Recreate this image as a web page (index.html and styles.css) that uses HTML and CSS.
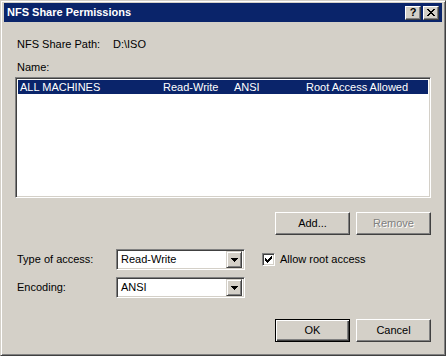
FILE: index.html
```html
<!DOCTYPE html>
<html>
<head>
<meta charset="utf-8">
<link rel="stylesheet" href="styles.css">
</head>
<body>
<div class="window">
  <div class="titlebar">
    <span class="title">NFS Share Permissions</span>
    <div class="caption-btns">
      <div class="cap cap-help">?</div>
      <div class="cap">
        <svg width="8" height="7" viewBox="0 0 8 7" shape-rendering="crispEdges"><path d="M0 0h2v1H0zM6 0h2v1H6zM1 1h2v1H1zM5 1h2v1H5zM2 2h4v1H2zM3 3h2v1H3zM2 4h4v1H2zM1 5h2v1H1zM5 5h2v1H5zM0 6h2v1H0zM6 6h2v1H6z" fill="#000"/></svg>
      </div>
    </div>
  </div>
  <div class="content">
    <div class="path-row"><span class="path-lbl">NFS Share Path:</span><span>D:\ISO</span></div>
    <div class="name-lbl">Name:</div>
    <div class="listbox">
      <div class="row selected">
        <span class="c1">ALL MACHINES</span><span class="c2">Read-Write</span><span class="c3">ANSI</span><span class="c4">Root Access Allowed</span>
      </div>
    </div>
    <div class="btn-row">
      <div class="btn">Add...</div>
      <div class="btn disabled">Remove</div>
    </div>
    <div class="field-row first">
      <span class="flbl">Type of access:</span>
      <div class="combo"><span class="combo-text">Read-Write</span><div class="drop"><svg width="7" height="4" viewBox="0 0 7 4" shape-rendering="crispEdges"><path d="M0 0h7v1H0zM1 1h5v1H1zM2 2h3v1H2zM3 3h1v1H3z" fill="#000"/></svg></div></div>
      <div class="check"><svg width="7" height="7" viewBox="0 0 7 7" shape-rendering="crispEdges"><path d="M0 2h1v3H0zM1 3h1v3H1zM2 4h1v3H2zM3 3h1v3H3zM4 2h1v3H4zM5 1h1v3H5zM6 0h1v3H6z" fill="#000"/></svg></div>
      <span class="check-lbl">Allow root access</span>
    </div>
    <div class="field-row second">
      <span class="flbl">Encoding:</span>
      <div class="combo"><span class="combo-text">ANSI</span><div class="drop"><svg width="7" height="4" viewBox="0 0 7 4" shape-rendering="crispEdges"><path d="M0 0h7v1H0zM1 1h5v1H1zM2 2h3v1H2zM3 3h1v1H3z" fill="#000"/></svg></div></div>
    </div>
    <div class="btn-row bottom">
      <div class="btn default"><span>OK</span></div>
      <div class="btn">Cancel</div>
    </div>
  </div>
</div>
</body>
</html>
```
FILE: styles.css
```css
html, body {
  margin: 0;
  padding: 0;
  background: #d4d0c8;
}
body {
  font-family: "Liberation Sans", Arial, sans-serif;
  font-size: 11px;
  color: #000;
}
.window {
  width: 446px;
  height: 356px;
  box-sizing: border-box;
  border: 1px solid;
  border-color: #d4d0c8 #404040 #404040 #d4d0c8;
  box-shadow: inset 1px 1px #fff, inset -1px -1px #808080;
  padding: 2px 3px 3px 3px;
  background: #d4d0c8;
  display: flex;
  flex-direction: column;
}
.titlebar {
  height: 19px;
  background: #0a246a;
  display: flex;
  align-items: center;
  justify-content: space-between;
  padding: 0 3px 0 3px;
  flex: none;
}
.title {
  color: #fff;
  font-weight: bold;
  font-size: 11px;
  line-height: 13px;
}
.caption-btns {
  display: flex;
  gap: 2px;
}
.cap {
  width: 16px;
  height: 14px;
  box-sizing: border-box;
  background: #d4d0c8;
  border: 1px solid;
  border-color: #fff #404040 #404040 #fff;
  box-shadow: inset -1px -1px #808080;
  display: flex;
  align-items: center;
  justify-content: center;
}
.cap-help {
  font-weight: bold;
  font-size: 11px;
  line-height: 11px;
  padding-bottom: 1px;
}
.content {
  padding: 0 8px 0 11px;
  display: flex;
  flex-direction: column;
}
.path-row {
  margin-top: 16px;
  padding-left: 2px;
  line-height: 13px;
  display: flex;
}
.path-lbl {
  width: 96px;
}
.name-lbl {
  margin-top: 10px;
  padding-left: 2px;
  line-height: 13px;
}
.listbox {
  margin-top: 3px;
  width: 416px;
  height: 121px;
  box-sizing: border-box;
  background: #fff;
  border: 1px solid;
  border-color: #808080 #fff #fff #808080;
  box-shadow: inset 1px 1px #404040, inset -1px -1px #d4d0c8;
  padding: 2px 2px 2px 2px;
}
.row {
  height: 14px;
  line-height: 14px;
  display: grid;
  grid-template-columns: 143px 71px 72px 1fr;
  padding-left: 2px;
}
.row.selected {
  background: #0a246a;
  color: #fff;
}
.btn-row {
  display: flex;
  justify-content: flex-end;
  gap: 6px;
  margin-top: 14px;
  width: 416px;
}
.btn-row.bottom {
  margin-top: 21px;
}
.btn {
  width: 75px;
  height: 23px;
  box-sizing: border-box;
  border: 1px solid;
  border-color: #fff #404040 #404040 #fff;
  box-shadow: inset -1px -1px #808080;
  background: #d4d0c8;
  display: flex;
  align-items: center;
  justify-content: center;
  line-height: 13px;
}
.btn.disabled {
  color: #808080;
  text-shadow: 1px 1px #fff;
}
.btn.default {
  border-color: #000;
  box-shadow: inset 1px 1px #fff, inset -1px -1px #404040, inset -2px -2px #808080;
}
.field-row {
  display: flex;
  align-items: center;
  height: 21px;
}
.field-row.first {
  margin-top: 14px;
}
.field-row.second {
  margin-top: 7px;
}
.flbl {
  width: 99px;
  padding-left: 2px;
  line-height: 13px;
}
.combo {
  width: 129px;
  height: 21px;
  box-sizing: border-box;
  background: #fff;
  border: 1px solid;
  border-color: #808080 #fff #fff #808080;
  box-shadow: inset 1px 1px #404040, inset -1px -1px #d4d0c8;
  padding: 2px;
  display: flex;
  align-items: center;
}
.combo-text {
  flex: 1;
  padding-left: 2px;
  line-height: 13px;
}
.drop {
  width: 16px;
  height: 17px;
  box-sizing: border-box;
  background: #d4d0c8;
  border: 1px solid;
  border-color: #d4d0c8 #404040 #404040 #d4d0c8;
  box-shadow: inset 1px 1px #fff, inset -1px -1px #808080;
  display: flex;
  align-items: center;
  justify-content: center;
}
.check {
  margin-left: 17px;
  width: 13px;
  height: 13px;
  box-sizing: border-box;
  background: #fff;
  border: 1px solid;
  border-color: #808080 #fff #fff #808080;
  box-shadow: inset 1px 1px #404040, inset -1px -1px #d4d0c8;
  display: flex;
  align-items: center;
  justify-content: center;
}
.check-lbl {
  margin-left: 5px;
  line-height: 13px;
}
```
